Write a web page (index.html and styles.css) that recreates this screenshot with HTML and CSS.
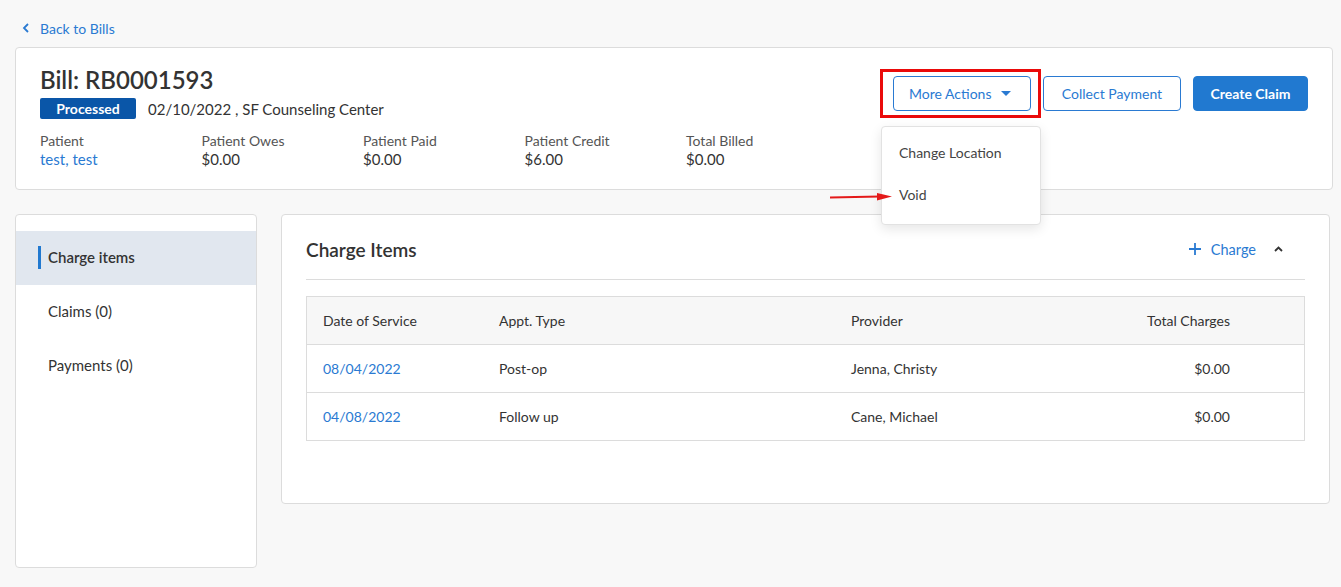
FILE: index.html
```html
<!DOCTYPE html>
<html lang="en">
<head>
<meta charset="utf-8">
<title>Bill RB0001593</title>
<link rel="stylesheet" href="styles.css">
</head>
<body>
<div class="page">
  <a class="back" href="#">
    <svg class="back-icon" width="8" height="10" viewBox="0 0 8 10"><path d="M6 1 L2 5 L6 9" fill="none" stroke="#2a7ad2" stroke-width="1.8"/></svg>
    <span>Back to Bills</span>
  </a>

  <section class="bill-card">
    <div class="bill-info">
      <h1 class="bill-title">Bill: RB0001593</h1>
      <div class="bill-meta">
        <span class="badge">Processed</span>
        <span class="meta-text">02/10/2022 , SF Counseling Center</span>
      </div>
      <div class="stats">
        <div class="stat"><div class="stat-label">Patient</div><div class="stat-value link">test, test</div></div>
        <div class="stat"><div class="stat-label">Patient Owes</div><div class="stat-value">$0.00</div></div>
        <div class="stat"><div class="stat-label">Patient Paid</div><div class="stat-value">$0.00</div></div>
        <div class="stat"><div class="stat-label">Patient Credit</div><div class="stat-value">$6.00</div></div>
        <div class="stat"><div class="stat-label">Total Billed</div><div class="stat-value">$0.00</div></div>
      </div>
    </div>
    <div class="actions">
      <div class="more-wrap">
        <button class="btn btn-outline more-btn">More Actions
          <svg class="caret" width="10" height="6" viewBox="0 0 10 6"><path d="M0 0 H10 L5 5 Z" fill="#2a7ad2"/></svg>
        </button>
        <div class="highlight"></div>
        <div class="dropdown">
          <div class="dd-item">Change Location</div>
          <div class="dd-item">Void</div>
          <svg class="arrow" width="62" height="8" viewBox="0 0 62 8"><path d="M0 4.6 L50 3.6" stroke="#e41a1a" stroke-width="2"/><path d="M47 0 L62 3.6 L47 7.5 Z" fill="#e41a1a"/></svg>
        </div>
      </div>
      <button class="btn btn-outline collect">Collect Payment</button>
      <button class="btn btn-primary">Create Claim</button>
    </div>
  </section>

  <div class="content">
    <nav class="side">
      <div class="side-item active"><span class="bar"></span>Charge items</div>
      <div class="side-item">Claims (0)</div>
      <div class="side-item">Payments (0)</div>
    </nav>

    <section class="main-card">
      <div class="main-head">
        <h2 class="main-title">Charge Items</h2>
        <div class="head-actions">
          <span class="add-charge">
            <svg width="12" height="12" viewBox="0 0 12 12"><path d="M6 0 V12 M0 6 H12" stroke="#2a7ad2" stroke-width="1.8"/></svg>
            Charge
          </span>
          <svg class="collapse" width="9" height="6" viewBox="0 0 9 6"><path d="M1 5 L4.5 1.5 L8 5" fill="none" stroke="#333" stroke-width="1.8"/></svg>
        </div>
      </div>
      <div class="table">
        <div class="row head">
          <div class="c1">Date of Service</div><div class="c2">Appt. Type</div><div class="c3">Provider</div><div class="c4">Total Charges</div>
        </div>
        <div class="row">
          <div class="c1 link">08/04/2022</div><div class="c2">Post-op</div><div class="c3">Jenna, Christy</div><div class="c4">$0.00</div>
        </div>
        <div class="row">
          <div class="c1 link">04/08/2022</div><div class="c2">Follow up</div><div class="c3">Cane, Michael</div><div class="c4">$0.00</div>
        </div>
      </div>
    </section>
  </div>
</div>
</body>
</html>
```

FILE: styles.css
```css
* { box-sizing: border-box; }
html, body { margin: 0; padding: 0; }
body {
  background: #f8f8f8;
  font-family: Lato, "Open Sans", Arial, sans-serif;
  color: #333;
  font-size: 14px;
}
.page { padding: 19px 8px 0 15px; }
.back {
  display: flex;
  align-items: center;
  gap: 10px;
  padding-left: 7px;
  color: #2a7ad2;
  text-decoration: none;
  font-size: 14px;
  height: 18px;
  margin-bottom: 10px;
}
.bill-card {
  background: #fff;
  border: 1px solid #dcdcdc;
  border-radius: 4px;
  height: 143px;
  display: flex;
  justify-content: space-between;
  padding: 18px 24px 0 24px;
}
.bill-title {
  margin: 0;
  font-size: 24px;
  font-weight: 600;
  color: #333;
  line-height: 28px;
}
.bill-meta { display: flex; align-items: center; gap: 12px; margin-top: 4px; }
.badge {
  background: #0a56a8;
  color: #fff;
  font-weight: 700;
  font-size: 14px;
  width: 96px;
  height: 21px;
  line-height: 21px;
  text-align: center;
  border-radius: 2px;
}
.meta-text { font-size: 15px; color: #333; }
.stats { display: flex; margin-top: 13px; }
.stat { width: 161.5px; }
.stat-label { font-size: 14px; color: #555; line-height: 18px; }
.stat-value { font-size: 15px; color: #333; line-height: 18px; }
.link { color: #2a7ad2; }
.actions { display: flex; gap: 12px; align-items: flex-start; padding-top: 10px; }
.more-wrap { position: relative; }
.highlight {
  position: absolute;
  left: -13px;
  top: -7px;
  width: 161px;
  height: 49px;
  border: 3px solid #ea0a0a;
  pointer-events: none;
}
.btn {
  height: 35px;
  border-radius: 4px;
  font-family: inherit;
  font-size: 14px;
  padding: 0 16px;
  cursor: pointer;
}
.btn-outline { background: #fff; border: 1px solid #2a7ad2; color: #2a7ad2; }
.more-btn { width: 138px; display: flex; align-items: center; gap: 10px; padding-left: 15px; }
.collect { width: 138px; padding: 0; }
.btn-primary { background: #2179d0; border: 1px solid #2179d0; color: #fff; font-weight: 700; width: 115px; padding: 0; }
.dropdown {
  position: absolute;
  left: -12px;
  top: 50px;
  width: 160px;
  background: #fff;
  border: 1px solid #e2e2e2;
  border-radius: 4px;
  box-shadow: 0 4px 12px rgba(0,0,0,0.10);
  padding: 8px 0 5px;
  z-index: 5;
}
.dd-item { padding: 0 17px; height: 42px; line-height: 36px; color: #444; font-size: 14px; }
.arrow { position: absolute; left: -52px; top: 66px; }
.content { display: flex; gap: 24px; margin-top: 24px; }
.side {
  width: 242px;
  height: 354px;
  background: #fff;
  border: 1px solid #dcdcdc;
  border-radius: 4px;
  padding-top: 16px;
}
.side-item {
  height: 54px;
  display: flex;
  align-items: center;
  padding-left: 32px;
  padding-bottom: 2px;
  font-size: 15px;
  color: #333;
  position: relative;
}
.side-item.active { background: #e1e7ef; font-weight: 600; }
.bar { position: absolute; left: 22px; top: 15px; width: 3px; height: 23px; background: #2179d0; }
.main-card {
  width: 1049px;
  height: 290px;
  background: #fff;
  border: 1px solid #dcdcdc;
  border-radius: 4px;
  padding: 0 24px;
}
.main-head {
  height: 65px;
  display: flex;
  justify-content: space-between;
  align-items: center;
  border-bottom: 1px solid #dcdcdc;
  padding-top: 4px;
}
.main-title { margin: 0; font-size: 19px; font-weight: 600; color: #333; }
.head-actions { display: flex; align-items: center; gap: 18px; padding-right: 22px; }
.add-charge { display: flex; align-items: center; gap: 10px; color: #2a7ad2; font-size: 14.5px; }
.table { margin-top: 16px; border: 1px solid #dcdcdc; }
.row {
  display: grid;
  grid-template-columns: 176px 352px 1fr 200px;
  height: 48px;
  align-items: center;
  border-top: 1px solid #dcdcdc;
  padding: 0 74px 0 16px;
  font-size: 14px;
  color: #333;
}
.row.head { border-top: none; background: #f7f7f7; height: 47px; }
.c4 { text-align: right; }
```
